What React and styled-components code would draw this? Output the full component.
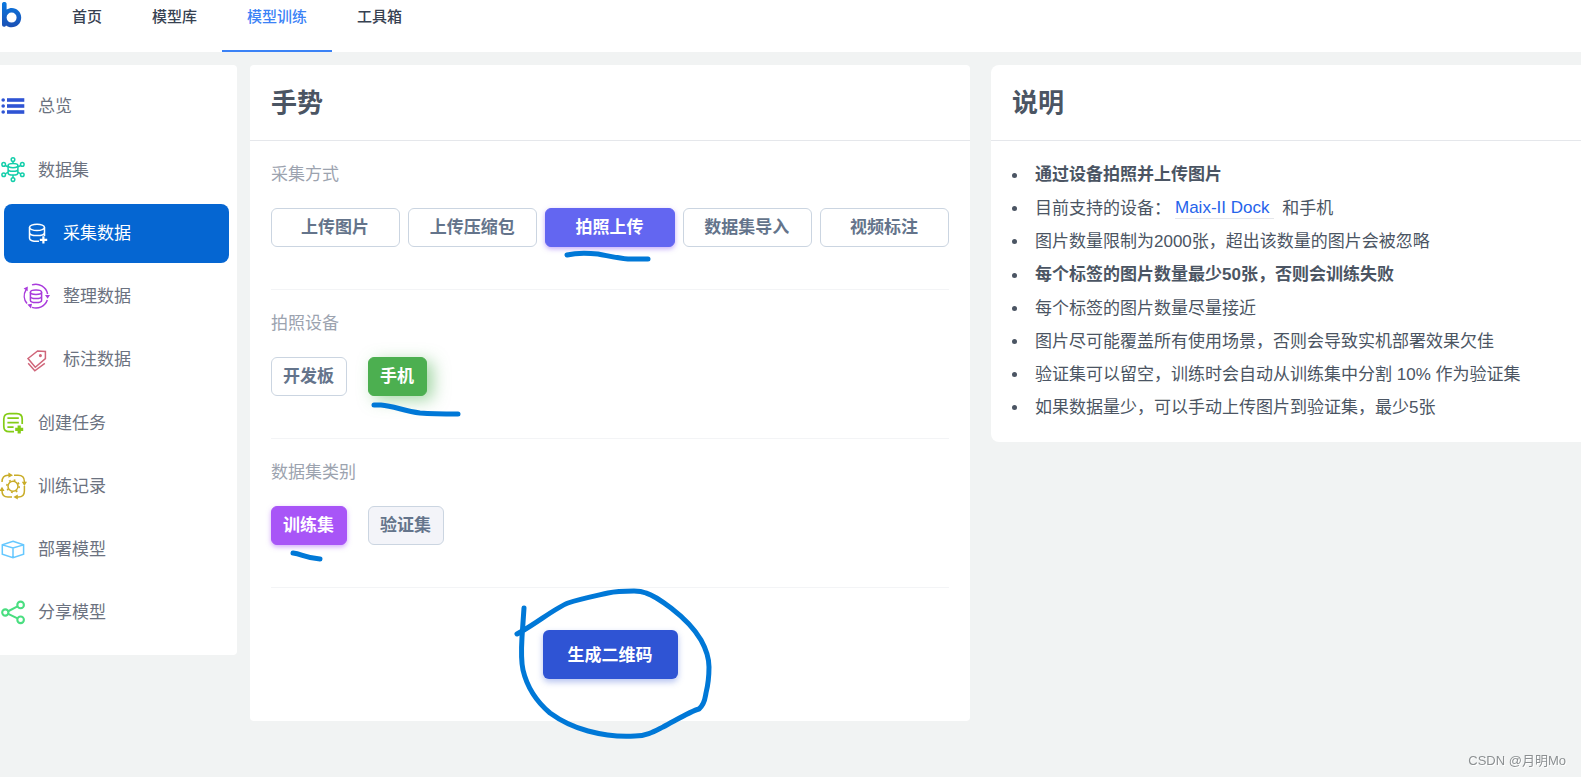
import styled, { createGlobalStyle, css } from "styled-components";
import { useState } from "react";

const navegacion = ["首页", "模型库", "模型训练", "工具箱"];

const metodos = ["上传图片", "上传压缩包", "拍照上传", "数据集导入", "视频标注"];

const grupos = [
  [{ label: "总览", color: "#2f54d4", icon: IconList }],
  [
    { label: "数据集", color: "#13ceaa", icon: IconDataset },
    { label: "采集数据", color: "#ffffff", icon: IconCollect, sub: true },
    { label: "整理数据", color: "#a93bdc", icon: IconArrange, sub: true },
    { label: "标注数据", color: "#d0667a", icon: IconTag, sub: true },
  ],
  [
    { label: "创建任务", color: "#84cc16", icon: IconTask },
    { label: "训练记录", color: "#c9ac27", icon: IconTraining },
    { label: "部署模型", color: "#66c8ff", icon: IconBox },
    { label: "分享模型", color: "#4ade80", icon: IconShare },
  ],
];

export default function App() {
  const [metodo, setMetodo] = useState("拍照上传");
  const [dispositivo, setDispositivo] = useState("手机");
  const [conjunto, setConjunto] = useState("训练集");

  return (
    <Page>
      <GlobalStyle />
      <Header>
        <Logo href="#" aria-label="首页">
          <LogoMark />
        </Logo>
        <Nav>
          {navegacion.map((item) => (
            <NavLink key={item} href="#" $active={item === "模型训练"}>
              {item}
            </NavLink>
          ))}
        </Nav>
      </Header>

      <Layout>
        <Sidebar>
          {grupos.map((grupo) => (
            <MenuGroup key={grupo[0].label}>
              {grupo.map(({ label, color, icon: Icon, sub }) => (
                <li key={label}>
                  <MenuLink href="#" $sub={sub} $active={label === "采集数据"}>
                    <MenuIcon viewBox="0 0 26 26" $color={color}>
                      <Icon />
                    </MenuIcon>
                    {label}
                  </MenuLink>
                </li>
              ))}
            </MenuGroup>
          ))}
        </Sidebar>

        <Card as="main">
          <CardHeader>
            <h2>手势</h2>
          </CardHeader>
          <CardBody>
            <Section>
              <SectionLabel>采集方式</SectionLabel>
              <MethodGrid>
                {metodos.map((item) => (
                  <Anchor key={item}>
                    <Option
                      $full
                      $tone={metodo === item ? "indigo" : undefined}
                      aria-pressed={metodo === item}
                      onClick={() => setMetodo(item)}
                    >
                      {item}
                    </Option>
                    {item === "拍照上传" && (
                      <Scribble>
                        <path d="M22 47 C30 45 44 45 53 46 C64 48 72 50 83 51 H103" />
                      </Scribble>
                    )}
                  </Anchor>
                ))}
              </MethodGrid>
            </Section>

            <Section>
              <SectionLabel>拍照设备</SectionLabel>
              <OptionRow>
                <Option
                  $tone={dispositivo === "开发板" ? "green" : undefined}
                  aria-pressed={dispositivo === "开发板"}
                  onClick={() => setDispositivo("开发板")}
                >
                  开发板
                </Option>
                <Anchor>
                  <Option
                    $tone={dispositivo === "手机" ? "green" : undefined}
                    aria-pressed={dispositivo === "手机"}
                    onClick={() => setDispositivo("手机")}
                  >
                    手机
                  </Option>
                  <Scribble>
                    <path d="M6 48 H13 C26 49 36 54 52 56 C65 57 76 57 90 57" />
                  </Scribble>
                </Anchor>
              </OptionRow>
            </Section>

            <Section>
              <SectionLabel>数据集类别</SectionLabel>
              <OptionRow>
                <Anchor>
                  <Option
                    $tone={conjunto === "训练集" ? "purple" : undefined}
                    aria-pressed={conjunto === "训练集"}
                    onClick={() => setConjunto("训练集")}
                  >
                    训练集
                  </Option>
                  <Scribble>
                    <path d="M22 47 C31 48 34 52 49 53" />
                  </Scribble>
                </Anchor>
                <Option
                  $tone={conjunto === "验证集" ? "purple" : "muted"}
                  aria-pressed={conjunto === "验证集"}
                  onClick={() => setConjunto("验证集")}
                >
                  验证集
                </Option>
              </OptionRow>
            </Section>

            <Actions>
              <Anchor>
                <PrimaryButton>生成二维码</PrimaryButton>
                <Scribble>
                  <path d="M-19 -22 L-21 7 C-22 24 -22 31 -20 40 C-16 57 -6 72 7 83 C18 91 30 97 45 101 C60 105 78 107 92 106 C104 106 112 101 120 97 C135 89 148 81 156 79 C162 74 162 68 163 63 C166 51 166 44 166 37 C166 27 163 19 158 10 C151 -2 141 -12 128 -22 C120 -28 110 -35 103 -37 C98 -39 94 -39 91 -39 C82 -39 74 -39 65 -37 C52 -34 37 -31 25 -27 C14 -23 -5 -8 -19 0 L-26 4" />
                </Scribble>
              </Anchor>
            </Actions>
          </CardBody>
        </Card>

        <Card as="aside" $large>
          <CardHeader>
            <h2>说明</h2>
          </CardHeader>
          <Notes>
            <li>
              <strong>通过设备拍照并上传图片</strong>
            </li>
            <li>
              目前支持的设备：
              <DeviceLink href="#">Maix-II Dock&nbsp;</DeviceLink>
              和手机
            </li>
            <li>图片数量限制为2000张，超出该数量的图片会被忽略</li>
            <li>
              <strong>每个标签的图片数量最少50张，否则会训练失败</strong>
            </li>
            <li>每个标签的图片数量尽量接近</li>
            <li>图片尽可能覆盖所有使用场景，否则会导致实机部署效果欠佳</li>
            <li>验证集可以留空，训练时会自动从训练集中分割 10% 作为验证集</li>
            <li>如果数据量少，可以手动上传图片到验证集，最少5张</li>
          </Notes>
        </Card>
      </Layout>

      <Watermark>CSDN @月明Mo</Watermark>
    </Page>
  );
}

function LogoMark() {
  return (
    <svg width="22" height="28" viewBox="0 0 22 28" fill="none">
      <defs>
        <linearGradient id="logo" x1="0" y1="0" x2="0" y2="1">
          <stop offset="0" stopColor="#0a78e0" />
          <stop offset="1" stopColor="#1b50b4" />
        </linearGradient>
      </defs>
      <path
        fill="url(#logo)"
        fillRule="evenodd"
        d="M2 4 C2 1.4 6.6 1.4 6.6 4 V9.6 C13 5.4 21.2 10 21.2 17.5 C21.2 23.4 17 27.2 11.6 27.2 C9 27.2 7.6 26.6 6 25.4 C5 27.6 2 27.2 2 24.6 Z M11.6 12.6 A5 5 0 1 0 11.6 22.6 A5 5 0 1 0 11.6 12.6 Z"
      />
    </svg>
  );
}

function IconList() {
  return (
    <g fill="currentColor" stroke="none">
      {[7, 13, 19].map((y) => (
        <g key={y}>
          <circle cx="3.2" cy={y} r="1.8" />
          <rect x="7" y={y - 1.8} width="17.3" height="3.6" />
        </g>
      ))}
    </g>
  );
}

function IconDataset() {
  const nodos = [
    [13, 2.6],
    [3.7, 7.4],
    [22.3, 7.4],
    [3.7, 17.8],
    [22.3, 17.8],
    [13, 22.6],
  ];
  return (
    <>
      {nodos.map(([x, y]) => (
        <circle key={`${x}-${y}`} cx={x} cy={y} r="1.8" />
      ))}
      <ellipse cx="13" cy="8.6" rx="4.9" ry="2.1" />
      <path d="M8.1 8.6 V16 C8.1 18.8 17.9 18.8 17.9 16 V8.6 M8.1 12.2 C8.1 15 17.9 15 17.9 12.2 M13 4.3 V6.5 M13 18 V20.9 M5.2 8.3 L8.1 10 M20.8 8.3 L17.9 10 M5.2 17 L8.1 15 M20.8 17 L17.9 15" />
    </>
  );
}

function IconCollect() {
  return (
    <>
      <ellipse cx="12" cy="7.4" rx="7.5" ry="3.2" />
      <path d="M4.5 7.4 V18.2 C4.5 20.5 8 21.6 14 21.2 M19.5 7.4 V16 M4.5 12.4 C4.5 16.6 19.5 16.6 19.5 12.4" />
      <path strokeWidth="2.2" d="M18.4 16.2 V23.6 M14.8 19.9 H22.2" />
    </>
  );
}

function IconArrange() {
  return (
    <>
      <ellipse cx="11" cy="9.2" rx="5.6" ry="2.2" />
      <path d="M5.4 9.2 V17.2 C5.4 20.4 16.6 20.4 16.6 17.2 V9.2 M5.4 13.2 C5.4 16.4 16.6 16.4 16.6 13.2" />
      <path d="M7 1.9 A12 12 0 0 1 22.6 11 M22.3 17 A12 12 0 0 1 7 24.4 M2 20.6 A12 12 0 0 1 1 6.8" />
      <path
        fill="currentColor"
        stroke="none"
        d="M-1.4 5.4 L2.8 3.4 L2.6 8.2 Z M20 12 H25 L22.6 15.8 Z M2.4 21.4 L7 20.8 L6 25.4 Z"
      />
    </>
  );
}

function IconTag() {
  return (
    <>
      <path d="M3 12.5 L12.6 4.9 L20.4 5.4 V12.6 L10.3 21.3 Z M3.2 17.3 L9.8 24.8 L19.8 17.3" />
      <circle cx="15.4" cy="9.6" r="0.8" fill="currentColor" />
    </>
  );
}

function IconTask() {
  return (
    <>
      <path
        strokeWidth="1.7"
        d="M22.2 14 V9 C22.2 5.5 20 3.6 16.8 3.6 H9.2 C6 3.6 3.8 5.5 3.8 9 V16.4 C3.8 19.6 6 21.6 9.2 21.6 H14"
      />
      <path strokeWidth="1.7" d="M7.4 8.2 H18.8 M7.4 12.7 H18.8 M7.4 17.2 H13.6" />
      <path strokeWidth="3.2" d="M19.2 15.4 V23.4 M15.2 19.4 H23.2" />
    </>
  );
}

function IconTraining() {
  return (
    <>
      <path d="M2 9 C2 4.5 4 2.2 8 2.2 H10 M14 2.2 H18 C22.4 2.2 24.4 4.6 24.4 8.4 V9.6 M24.4 13 V18 C24.4 22 22.4 24 18.4 24 H16.8 M12 24 H8 C4 24 2 21.8 2 18" />
      <path
        fill="currentColor"
        stroke="none"
        d="M8.4 -0.4 L13 2.2 L8.4 4.8 Z M21.8 8.8 H27 L24.4 13 Z M17.8 21.4 V26.6 L13.4 24 Z M-0.6 18 H4.6 L2 13.8 Z"
      />
      <circle cx="13" cy="13.2" r="5" />
      <circle cx="13" cy="13.2" r="6.2" strokeWidth="1.6" strokeDasharray="1.8 3.07" />
    </>
  );
}

function IconBox() {
  return (
    <path d="M13 5.2 L23.6 8.9 V18.3 L13 21.8 L2.3 18.3 V8.9 Z M2.3 8.9 L13 12 L23.6 8.9 M13 12 V21.8" />
  );
}

function IconShare() {
  return (
    <g strokeWidth="2.1">
      <circle cx="5.3" cy="13.5" r="3.1" />
      <circle cx="20.6" cy="5.9" r="3.3" />
      <circle cx="20.6" cy="20.8" r="3.3" />
      <path d="M8.2 12.2 L17.5 7.4 M8.2 14.9 L17.5 19.4" />
    </g>
  );
}

const GlobalStyle = createGlobalStyle`
  * {
    box-sizing: border-box;
  }

  body {
    margin: 0;
    background: #f1f3f3;
    color: #4b5563;
    font-family: "Liberation Sans", "Noto Sans CJK SC", sans-serif;
    font-size: 17px;
    line-height: 25px;
  }

  a {
    text-decoration: none;
  }
`;

const Page = styled.div`
  min-height: 100vh;
`;

const Header = styled.header`
  display: flex;
  align-items: stretch;
  gap: 25px;
  background: #fff;
`;

const Logo = styled.a`
  display: block;
  width: 22px;
  height: 28px;
`;

const Nav = styled.nav`
  display: flex;
`;

const NavLink = styled.a`
  padding: 4px 25px 20px;
  border-bottom: 2px solid ${({ $active }) => ($active ? "#3b82f6" : "transparent")};
  color: ${({ $active }) => ($active ? "#3b82f6" : "#374151")};
  font-size: 15px;
  font-weight: 500;
  line-height: 26px;
`;

const Layout = styled.div`
  display: grid;
  grid-template-columns: 237px minmax(0, 733fr) minmax(0, 611fr);
  align-items: start;
  padding-top: 13px;
`;

const Sidebar = styled.nav`
  display: flex;
  flex-direction: column;
  gap: 5px;
  padding: 12px 0 13px;
  border-radius: 0 4px 4px 0;
  background: #fff;
`;

const MenuGroup = styled.ul`
  display: flex;
  flex-direction: column;
  gap: 4px;
  margin: 0;
  padding: 0;
  list-style: none;
`;

const MenuLink = styled.a`
  display: flex;
  align-items: center;
  gap: 12px;
  height: 59px;
  color: #6b7280;

  ${({ $sub }) =>
    $sub &&
    css`
      margin: 0 8px 0 4px;
      padding-left: 21px;
      border-radius: 8px;
    `}

  ${({ $active }) =>
    $active &&
    css`
      background: #0566d2;
      color: #fff;
    `}
`;

const MenuIcon = styled.svg`
  width: 26px;
  height: 26px;
  margin-bottom: 1px;
  overflow: visible;
  color: ${({ $color }) => $color};
  fill: none;
  stroke: currentColor;
  stroke-width: 1.5;
`;

const Card = styled.section`
  margin-left: ${({ $large }) => ($large ? "21px" : "13px")};
  border-radius: ${({ $large }) => ($large ? "8px 0 0 8px" : "4px")};
  background: #fff;
`;

const CardHeader = styled.div`
  padding: 19px 21px 18px;
  border-bottom: 1px solid #e5e7eb;

  h2 {
    margin: 0;
    font-size: 26px;
    line-height: 38px;
    font-weight: 700;
    color: #4b5563;
  }
`;

const CardBody = styled.div`
  padding: 0 21px;
`;

const Section = styled.section`
  padding: 21px 0 42px;
  border-bottom: 1px solid #f3f4f6;
`;

const SectionLabel = styled.div`
  margin-bottom: 20px;
  line-height: 26px;
  color: #9ca3af;
`;

const MethodGrid = styled.div`
  display: grid;
  grid-template-columns: repeat(5, 1fr);
  gap: 8px;
`;

const OptionRow = styled.div`
  display: flex;
  gap: 21px;
`;

const Anchor = styled.div`
  position: relative;
`;

// Pen marks drawn over the control they point at
const Scribble = styled.svg`
  position: absolute;
  top: 0;
  left: 0;
  width: 100%;
  height: 100%;
  overflow: visible;
  pointer-events: none;
  fill: none;
  stroke: #0078d7;
  stroke-width: 5;
  stroke-linecap: round;
  stroke-linejoin: round;
`;

const tones = {
  indigo: css`
    border-color: #6366f1;
    background: #6366f1;
    color: #fff;
    box-shadow: 0 2px 5px rgba(139, 92, 246, 0.5);
  `,
  green: css`
    border-color: #4caf50;
    background: #4caf50;
    color: #fff;
    box-shadow: 6px 4px 16px rgba(76, 175, 80, 0.5);
  `,
  purple: css`
    border-color: #a855f7;
    background: #a855f7;
    color: #fff;
    box-shadow: 0 2px 5px rgba(168, 85, 247, 0.5);
  `,
  muted: css`
    background: #f3f4f9;
  `,
};

const Option = styled.button`
  display: block;
  width: ${({ $full }) => ($full ? "100%" : "auto")};
  height: 39px;
  padding: 0 12px 0 11px;
  border: 1px solid #cbd5e1;
  border-radius: 6px;
  background: #fff;
  color: #64748b;
  font-family: inherit;
  font-size: 17px;
  line-height: 25px;
  font-weight: 700;
  white-space: nowrap;
  cursor: pointer;

  ${({ $tone }) => tones[$tone]}
`;

const Actions = styled.div`
  display: flex;
  justify-content: center;
  padding: 42px 0;
`;

const PrimaryButton = styled.button`
  display: block;
  height: 49px;
  padding: 0 25px 2px;
  border: none;
  border-radius: 6px;
  background: #2f54d4;
  color: #fff;
  font-family: inherit;
  font-size: 17px;
  font-weight: 700;
  box-shadow: 0 3px 6px rgba(47, 84, 212, 0.35);
  cursor: pointer;
`;

const Notes = styled.ul`
  display: flex;
  flex-direction: column;
  gap: 8px;
  margin: 0;
  padding: 21px 21px 22px;
  list-style: none;

  li {
    display: flex;
    align-items: center;
    white-space: pre-wrap;
  }

  li::before {
    content: "";
    flex: none;
    width: 5px;
    height: 5px;
    margin-right: 18px;
    border-radius: 50%;
    background: #4b5563;
  }

  strong {
    line-height: 26px;
  }
`;

const DeviceLink = styled.a`
  margin: 0 8px 0 4px;
  border-bottom: 1px solid #e5e7eb;
  color: #2563eb;
  line-height: 20px;
`;

const Watermark = styled.div`
  position: fixed;
  right: 15px;
  bottom: 5px;
  color: #8c9092;
  font-size: 13px;
  line-height: 22px;
  text-shadow: 1px 1px 0 #fff;
`;
